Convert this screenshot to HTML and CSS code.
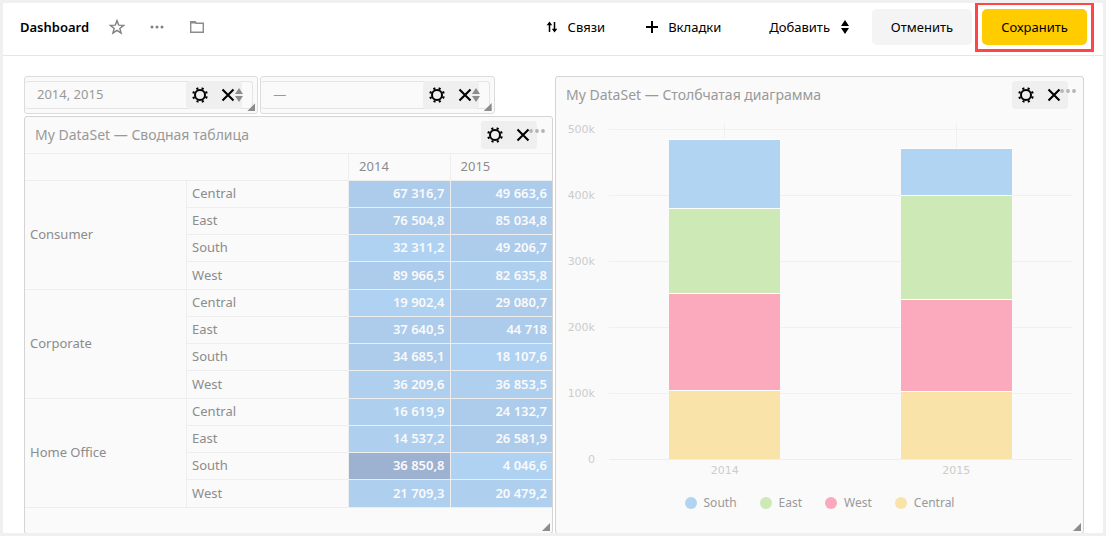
FILE: index.html
```html
<!DOCTYPE html>
<html lang="ru">
<head>
<meta charset="utf-8">
<title>Dashboard</title>
<link rel="stylesheet" href="styles.css">
</head>
<body>
<svg class="sprite" aria-hidden="true">
  <symbol id="gear" viewBox="0 0 16 16">
    <circle cx="8" cy="8" r="5" fill="none" stroke="#000" stroke-width="2"/>
    <circle cx="8" cy="8" r="6.8" fill="none" stroke="#000" stroke-width="2.2" stroke-dasharray="2.1 3.24" stroke-dashoffset="-1.4"/>
  </symbol>
  <symbol id="cross" viewBox="0 0 16 16">
    <path d="M2.5 2.5 13.5 13.5M13.5 2.5 2.5 13.5" fill="none" stroke="#000" stroke-width="2.1"/>
  </symbol>
  <symbol id="updown" viewBox="0 0 8 14">
    <path d="M4 0 8 6H0zM0 8H8L4 14z" fill="currentColor"/>
  </symbol>
  <symbol id="dots" viewBox="0 0 16 4">
    <circle cx="2" cy="2" r="1.9" fill="currentColor"/><circle cx="8" cy="2" r="1.9" fill="currentColor"/><circle cx="14" cy="2" r="1.9" fill="currentColor"/>
  </symbol>
</svg>
<div class="frame">
  <header class="topbar">
    <h1 class="title">Dashboard</h1>
    <div class="tools">
      <button class="flat" aria-label="В избранное"><svg width="16" height="16" viewBox="0 0 16 16"><path d="M8 1.6 9.7 6.1 14.6 6.4 10.8 9.4 12.1 14.1 8 11.4 3.9 14.1 5.2 9.4 1.4 6.4 6.3 6.1z" fill="none" stroke="#808080" stroke-width="1.4"/></svg></button>
      <button class="flat" aria-label="Ещё"><svg width="16" height="16" viewBox="0 0 16 16"><g fill="#808080"><circle cx="3" cy="8" r="1.5"/><circle cx="8" cy="8" r="1.5"/><circle cx="13" cy="8" r="1.5"/></g></svg></button>
      <button class="flat" aria-label="Папка"><svg width="16" height="16" viewBox="0 0 16 16"><path d="M1.7 2.7H6L7.2 4.2H14.3V13.3H1.7z" fill="none" stroke="#8c8c8c" stroke-width="1.4"/><path d="M1 2H6.3L7.5 4.5H1z" fill="#8c8c8c"/></svg></button>
    </div>
    <nav class="actions">
      <button class="flat links"><svg width="16" height="16" viewBox="0 0 16 16"><path d="M5.5 13V4M10.5 3V12" stroke="#000" stroke-width="1.5" fill="none"/><path d="M2.6 6.2 5.5 2.6 8.2 6.2zM7.8 9.8 10.5 13.4 13.4 9.8z"/></svg>Связи</button>
      <button class="flat tabs"><svg width="16" height="16" viewBox="0 0 16 16"><path d="M8 2V14M2 8H14" stroke="#000" stroke-width="2" fill="none"/></svg>Вкладки</button>
      <button class="flat add">Добавить<svg class="caret" width="8" height="14"><use href="#updown"/></svg></button>
      <button class="button">Отменить</button>
      <div class="highlight"><button class="button primary">Сохранить</button></div>
    </nav>
  </header>

  <main class="dashboard">
    <div class="column">
      <div class="selectors">
        <div class="widget selector">
          <select class="select" aria-label="Год"><option>2014, 2015</option></select>
          <div class="controls"><button class="flat" aria-label="Настроить"><svg width="16" height="16"><use href="#gear"/></svg></button><button class="flat" aria-label="Удалить"><svg width="16" height="16"><use href="#cross"/></svg></button></div>
          <svg class="select-arrow" width="8" height="14"><use href="#updown"/></svg>
          <span class="resize"></span>
        </div>
        <div class="widget selector">
          <select class="select" aria-label="Фильтр"><option>—</option></select>
          <div class="controls"><button class="flat" aria-label="Настроить"><svg width="16" height="16"><use href="#gear"/></svg></button><button class="flat" aria-label="Удалить"><svg width="16" height="16"><use href="#cross"/></svg></button></div>
          <svg class="select-arrow" width="8" height="14"><use href="#updown"/></svg>
          <span class="resize"></span>
        </div>
      </div>
      <section class="widget fill">
        <h2 class="heading">My DataSet — Сводная таблица</h2>
        <table class="pivot">
          <colgroup><col class="wide"><col class="wide"><col><col></colgroup>
          <thead><tr><th colspan="2"></th><th>2014</th><th>2015</th></tr></thead>
          <tbody>
            <tr><th rowspan="4">Consumer</th><th>Central</th><td>67 316,7</td><td>49 663,6</td></tr>
            <tr><th>East</th><td>76 504,8</td><td>85 034,8</td></tr>
            <tr><th>South</th><td class="light">32 311,2</td><td>49 206,7</td></tr>
            <tr class="last"><th>West</th><td>89 966,5</td><td class="mid">82 635,8</td></tr>
          </tbody>
          <tbody>
            <tr><th rowspan="4">Corporate</th><th>Central</th><td class="light">19 902,4</td><td>29 080,7</td></tr>
            <tr><th>East</th><td>37 640,5</td><td>44 718</td></tr>
            <tr><th>South</th><td>34 685,1</td><td class="light">18 107,6</td></tr>
            <tr class="last"><th>West</th><td class="mid">36 209,6</td><td class="mid">36 853,5</td></tr>
          </tbody>
          <tbody>
            <tr><th rowspan="4">Home Office</th><th>Central</th><td class="mid">16 619,9</td><td>24 132,7</td></tr>
            <tr><th>East</th><td class="mid">14 537,2</td><td>26 581,9</td></tr>
            <tr><th>South</th><td class="dark">36 850,8</td><td class="light">4 046,6</td></tr>
            <tr class="last"><th>West</th><td class="mid">21 709,3</td><td class="mid">20 479,2</td></tr>
          </tbody>
        </table>
        <div class="controls"><button class="flat" aria-label="Настроить"><svg width="16" height="16"><use href="#gear"/></svg></button><button class="flat" aria-label="Удалить"><svg width="16" height="16"><use href="#cross"/></svg></button></div>
        <svg class="more" width="16" height="4"><use href="#dots"/></svg>
        <span class="resize"></span>
      </section>
    </div>

    <section class="widget">
      <h2 class="heading">My DataSet — Столбчатая диаграмма</h2>
      <div class="chart">
        <div class="y-axis"><span>500k</span><span>400k</span><span>300k</span><span>200k</span><span>100k</span><span>0</span></div>
        <div class="plot">
          <div class="grid"><i></i><i></i><i></i><i></i><i></i></div>
          <div class="category"><div class="bar">
            <div class="south" style="height:69px"></div><div class="east" style="height:85px"></div><div class="west" style="height:97px"></div><div class="central" style="height:69px"></div>
          </div></div>
          <div class="category"><div class="bar">
            <div class="south" style="height:47px"></div><div class="east" style="height:104px"></div><div class="west" style="height:92px"></div><div class="central" style="height:68px"></div>
          </div></div>
        </div>
        <div class="x-axis"><span>2014</span><span>2015</span></div>
      </div>
      <ul class="legend">
        <li><i class="south"></i>South</li><li><i class="east"></i>East</li><li><i class="west"></i>West</li><li><i class="central"></i>Central</li>
      </ul>
      <div class="controls"><button class="flat" aria-label="Настроить"><svg width="16" height="16"><use href="#gear"/></svg></button><button class="flat" aria-label="Удалить"><svg width="16" height="16"><use href="#cross"/></svg></button></div>
      <svg class="more" width="16" height="4"><use href="#dots"/></svg>
      <span class="resize"></span>
    </section>
  </main>
</div>
</body>
</html>
```
FILE: styles.css
```css
* { box-sizing: border-box; }
body {
  margin: 0;
  padding: 3px;
  min-height: 100vh;
  display: flex;
  background: #f0f0f0;
  color: #000;
  font: 13px/20px "Noto Sans", "Open Sans", sans-serif;
}
button, select { font: inherit; color: inherit; }
svg { display: block; flex: none; }
.sprite { position: absolute; width: 0; height: 0; }
.frame {
  flex: 1;
  min-width: 0;
  display: flex;
  flex-direction: column;
  overflow: hidden;
  background: #fff;
}

.topbar {
  display: flex;
  align-items: center;
  height: 53px;
  padding: 0 16px 4px 17px;
  border-bottom: 1px solid #e6e6e6;
}
.title { margin: 0; font-size: 13px; line-height: 20px; font-weight: 600; }
.tools { display: flex; gap: 24px; margin-left: 20px; }
.flat {
  display: flex;
  align-items: center;
  gap: 8px;
  padding: 0;
  border: 0;
  background: none;
  cursor: pointer;
}
.actions { display: flex; align-items: center; margin-left: auto; }
.tabs { margin-left: 39px; }
.add { gap: 11px; margin: 0 23px 0 48px; }
.button {
  height: 36px;
  min-width: 100px;
  padding: 0 16px;
  border: 0;
  border-radius: 5px;
  background: #f4f4f4;
  cursor: pointer;
}
.primary { min-width: 105px; background: #ffcc00; }
.highlight { position: relative; margin-left: 10px; }
.highlight::after {
  content: "";
  position: absolute;
  inset: -7px;
  border: 3px solid #ff4545;
  pointer-events: none;
}

.dashboard {
  flex: 1;
  display: grid;
  grid-template-columns: minmax(0, 1fr) minmax(0, 1fr);
  gap: 2px;
  padding: 20px 19px 0 21px;
  margin-bottom: -1px;
}
.column { display: flex; flex-direction: column; gap: 2px; }
.selectors { display: grid; grid-template-columns: 44.3% 44.3%; gap: 2px; }
.widget {
  position: relative;
  border: 1px solid #d4d4d4;
  border-radius: 3px;
  background: #fafafa;
  color: #8c8c8c;
}
.fill { flex: 1; }
.selector { padding: 4px 4px 4px 0; border-color: #dcdcdc; }
.select {
  display: block;
  width: 100%;
  height: 28px;
  padding: 0 12px 2px;
  border: 1px solid #e4e4e4;
  border-left: 0;
  border-radius: 3px;
  background: none;
  appearance: none;
  color: #999;
}
.controls {
  position: absolute;
  top: 4px;
  right: 15px;
  display: flex;
  gap: 12px;
  padding: 6px;
  border-radius: 4px;
  background: #efefef;
}
.select-arrow { position: absolute; top: 11px; right: 14px; color: #8c8c8c; }
.more { position: absolute; top: 12px; right: 7px; color: #b4b4b4; }
.resize {
  position: absolute;
  right: 2px;
  bottom: 2px;
  width: 8px;
  height: 8px;
  background: #8c8c8c;
  clip-path: polygon(100% 0, 100% 100%, 0 100%);
}
.heading {
  margin: 0;
  padding: 8px 10px;
  font-size: 14px;
  line-height: 20px;
  font-weight: 400;
  color: #999;
}

.pivot {
  width: 100%;
  table-layout: fixed;
  border-collapse: separate;
  border-spacing: 0;
  border-top: 1px solid #eee;
}
.wide { width: 30.75%; }
.pivot th, .pivot td {
  height: 27px;
  padding: 0 5px 2px;
  border: solid #eee;
  border-width: 0 1px 1px 0;
  line-height: 20px;
}
.pivot th { font-weight: 400; text-align: left; }
.pivot thead th { padding-left: 10px; }
.pivot .last th, .pivot .last td { height: 28px; }
.pivot td { background: #adcbeb; color: #fafafa; font-weight: 600; text-align: right; }
.pivot tr > :last-child { border-right: 0; }
.pivot td.light { background: #b0d2f2; }
.pivot td.mid { background: #afcfee; }
.pivot td.dark { background: #9db1d1; }

.chart {
  display: grid;
  grid-template-columns: 42px 1fr;
  padding: 10px 11px 0 11px;
  font: 11px/14px "DejaVu Sans", sans-serif;
  color: #ccc;
}
.y-axis {
  display: flex;
  flex-direction: column;
  justify-content: space-between;
  width: 28px;
  margin: 0 0 -7px;
  text-align: right;
}
.plot { position: relative; display: flex; height: 337px; border-bottom: 1px solid #eee; }
.grid { position: absolute; inset: 6px 0 0; }
.grid i { display: block; height: 66px; border-top: 1px solid #f0f0f0; }
.category {
  flex: 1;
  display: flex;
  align-items: flex-end;
  justify-content: center;
  background: linear-gradient(#f0f0f0, #f0f0f0) center / 1px 100% no-repeat;
}
.bar { position: relative; width: 48%; background: #fff; }
.bar div { border-top: 1px solid #fff; background-clip: padding-box; }
.south { background: #b1d4f3; }
.east { background: #cde9b5; }
.west { background: #fba9bc; }
.central { background: #fae3a8; }
.x-axis { grid-column: 2; display: flex; padding-top: 4px; text-align: center; }
.x-axis span { flex: 1; }
.legend {
  display: flex;
  justify-content: center;
  gap: 23px;
  margin: 15px 0 0;
  padding: 0;
  list-style: none;
  font-size: 12px;
  line-height: 20px;
  color: #999;
}
.legend li { display: flex; align-items: center; gap: 7px; }
.legend i { width: 12px; height: 12px; border-radius: 50%; }
```
